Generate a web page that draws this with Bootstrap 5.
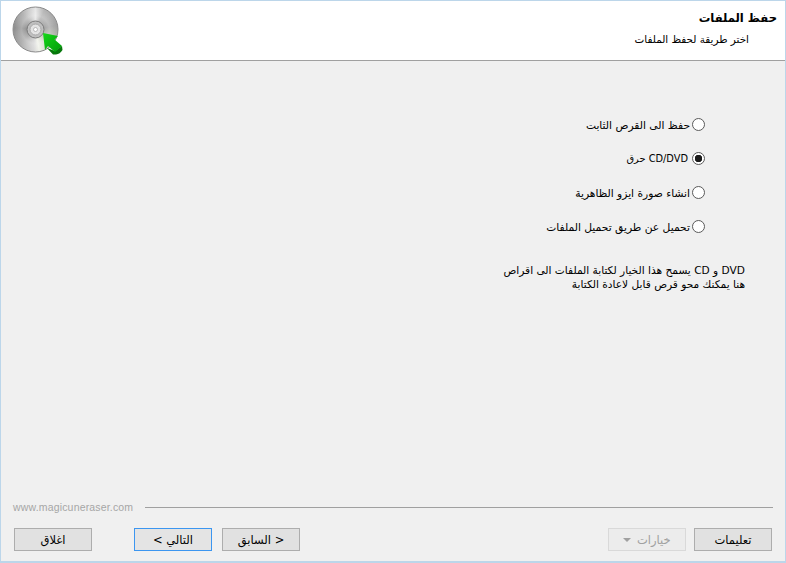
<!DOCTYPE html>
<html lang="ar">
<head>
<meta charset="utf-8">
<title>حفظ الملفات</title>
<link href="https://cdn.jsdelivr.net/npm/bootstrap@5.3.0/dist/css/bootstrap.min.css" rel="stylesheet">
<style>
html,body{height:100%;margin:0}
body{background:#f0f0f0;font-family:"DejaVu Sans",sans-serif;font-size:11px;color:#000;overflow:hidden}
.wiz-window{width:786px;height:563px;border:1px solid #bcd6ea;border-bottom-width:2px}
.wiz-head{height:60px;background:#fff;border-bottom:1px solid #a0a0a0;padding:0 8px 0 11px}
.wiz-title{font-size:11.6px;font-weight:700;line-height:15px;margin-top:10px}
.wiz-sub{font-size:10.4px;line-height:14px;margin-top:6px;margin-right:28px}
.wiz-opts{padding:57px 80px 0 0;gap:20px}
.wiz-opt{height:14px;line-height:14px;gap:2px;font-size:10.7px}
.wiz-opt span{padding-top:1px}
.wiz-radio{appearance:none;width:13px;height:13px;border:1px solid #5a5a5a;border-radius:50%;background:#fff;margin:0 0 1px;flex:none}
.wiz-radio:checked{background:radial-gradient(circle,#1a1a1a 0 3.5px,#fff 4px)}
.wiz-opt .wiz-opt-lat{margin-right:2px;font-size:9.8px;padding-top:0}
.wiz-desc{padding:29px 40px 0 0;font-size:10.6px;line-height:14px}
.wiz-foot{padding:0 12px 10px 12px}
.wiz-site{color:#a6a6a6;font-family:"Liberation Sans",sans-serif;font-size:10.5px;letter-spacing:.17px;line-height:14px}
.wiz-rule{height:1px;background:#a0a0a0;margin-left:12px}
.wiz-btns{margin-top:14px;padding:0 1px}
.wiz-btn{width:78px;height:23px;padding:0;font-size:11.5px;line-height:20px;border:1px solid #adadad;background:#e1e1e1;color:#000;border-radius:0}
.wiz-btn.wiz-main{border-color:#3c96f0;background:#e4e4e4;margin-left:42px}
.wiz-btn.wiz-prev{margin-left:10px}
.wiz-btn:disabled{border-color:#d9d9d9;background:#ececec;color:#a0a0a0;opacity:1}
.wiz-caret{display:inline-block;border:4px solid transparent;border-top:4px solid #a0a0a0;border-bottom:0;vertical-align:middle;margin-right:2px}
.wiz-disc{width:45px;height:45px;border-radius:50%;background:radial-gradient(circle,transparent 0 8px,rgba(255,255,255,.25) 14px,transparent 21px),conic-gradient(#e6e6e6 0deg,#b4b4b4 25deg,#a2a2a2 80deg,#c2c7b8 130deg,#f0f2ea 170deg,#d8d8d8 185deg,#a8a8a8 230deg,#8f8f8f 275deg,#b0b0b0 320deg,#e6e6e6 360deg)}
</style>
</head>
<body>
<div class="wiz-window d-flex flex-column">
  <div class="wiz-head d-flex justify-content-between">
    <svg width="52" height="54" viewBox="0 0 52 54" class="mt-1" aria-hidden="true">
      <defs>
        <linearGradient id="arr" x1="0" y1="0" x2="1" y2="1"><stop offset="0" stop-color="#14d818"/><stop offset="1" stop-color="#049a0a"/></linearGradient>
      </defs>
      <foreignObject x="1" y="2" width="46" height="46"><div xmlns="http://www.w3.org/1999/xhtml" class="wiz-disc"></div></foreignObject>
      <circle cx="23.5" cy="24.5" r="22.5" fill="none" stroke="#8a8a8a"/>
      <circle cx="23.5" cy="24.5" r="8.5" fill="#c0c0c0" stroke="#7c7c7c"/>
      <circle cx="23.5" cy="24.5" r="5.5" fill="#e4e4e4" stroke="#a8a8a8"/>
      <circle cx="23.5" cy="24.5" r="2" fill="#fff" stroke="#999" stroke-width=".6"/>
      <path d="M50 41 L50.5 45 Q48 49 44 49.5 L41 49.5 L35 43 L43 46Z" fill="#07780c"/>
      <path d="M31 28 L46 31 L42.5 34.5 L50 41 L43 47 L36 41 L33 45Z" fill="url(#arr)"/>
    </svg>
    <div class="text-end" dir="rtl">
      <div class="wiz-title">حفظ الملفات</div>
      <div class="wiz-sub">اختر طريقة لحفظ الملفات</div>
    </div>
  </div>
  <div class="flex-grow-1" dir="rtl">
    <div class="wiz-opts d-flex flex-column">
      <label class="wiz-opt d-flex align-items-center"><input class="wiz-radio" type="radio" name="m"><span>حفظ الى القرص الثابت</span></label>
      <label class="wiz-opt d-flex align-items-center"><input class="wiz-radio" type="radio" name="m" checked><span class="wiz-opt-lat">CD/DVD حرق</span></label>
      <label class="wiz-opt d-flex align-items-center"><input class="wiz-radio" type="radio" name="m"><span>انشاء صورة ايزو الظاهرية</span></label>
      <label class="wiz-opt d-flex align-items-center"><input class="wiz-radio" type="radio" name="m"><span>تحميل عن طريق تحميل الملفات</span></label>
    </div>
    <div class="wiz-desc">
      <div>DVD و CD يسمح هذا الخيار لكتابة الملفات الى اقراص</div>
      <div>هنا يمكنك محو قرص قابل لاعادة الكتابة</div>
    </div>
  </div>
  <div class="wiz-foot">
    <div class="d-flex align-items-center">
      <span class="wiz-site">www.magicuneraser.com</span>
      <div class="wiz-rule flex-grow-1"></div>
    </div>
    <div class="wiz-btns d-flex justify-content-between">
      <div class="d-flex">
        <button class="btn wiz-btn" type="button">اغلاق</button>
        <button class="btn wiz-btn wiz-main" type="button">&lt; التالي</button>
        <button class="btn wiz-btn wiz-prev" type="button">السابق &gt;</button>
      </div>
      <div class="d-flex gap-2">
        <button class="btn wiz-btn" type="button" disabled><span class="wiz-caret"></span> خيارات</button>
        <button class="btn wiz-btn" type="button">تعليمات</button>
      </div>
    </div>
  </div>
</div>
<script src="https://cdn.jsdelivr.net/npm/bootstrap@5.3.0/dist/js/bootstrap.bundle.min.js"></script>
</body>
</html>
